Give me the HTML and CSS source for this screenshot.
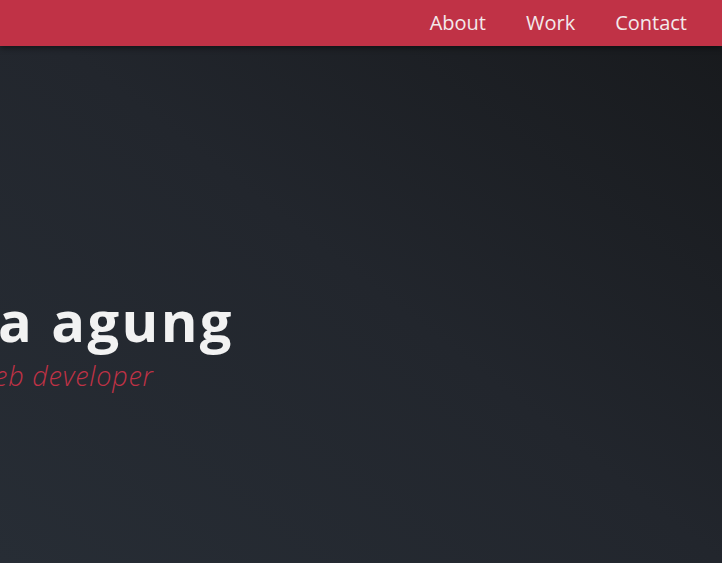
FILE: index.html
```html
<!DOCTYPE html>
<html lang="en">
<head>
<meta charset="utf-8">
<title>agung — web developer</title>
<link rel="stylesheet" href="styles.css">
</head>
<body>
<header class="topbar">
  <nav class="nav">
    <a class="nav-link" href="#about">About</a>
    <a class="nav-link" href="#work">Work</a>
    <a class="nav-link" href="#contact">Contact</a>
  </nav>
</header>
<main class="hero">
  <div class="hero-text">
    <h1 class="hero-title">a agung</h1>
    <p class="hero-sub">web developer</p>
  </div>
</main>
</body>
</html>
```
FILE: styles.css
```css
* { box-sizing: border-box; }
html, body { margin: 0; padding: 0; height: 100%; }
body {
  font-family: "Open Sans", "Noto Sans", sans-serif;
  background: linear-gradient(to top right, #272d35 0%, #22262d 50%, #17191c 100%);
  overflow: hidden;
  display: flex;
  flex-direction: column;
}
.topbar {
  height: 46px;
  background: #c03246;
  box-shadow: 0 2px 6px rgba(0, 0, 0, 0.45);
  display: flex;
  justify-content: flex-end;
  align-items: center;
  padding-right: 15px;
  position: relative;
  z-index: 1;
}
.nav { display: flex; }
.nav-link {
  color: #f3e9eb;
  text-decoration: none;
  font-size: 20px;
  padding: 0 20px;
  line-height: 46px;
}
.hero {
  flex: 1;
  display: flex;
  flex-direction: column;
  justify-content: flex-start;
  padding-top: 242px;
}
.hero-text { margin-left: -2px; }
.hero-title {
  margin: 0;
  font-size: 56px;
  font-weight: 700;
  letter-spacing: 2.4px;
  color: #f2f2f2;
  line-height: 64px;
}
.hero-sub {
  margin: 7px 0 0 -23px;
  font-size: 27px;
  font-weight: 300;
  font-style: italic;
  letter-spacing: 0.8px;
  color: #c03246;
  line-height: 34px;
}
```
